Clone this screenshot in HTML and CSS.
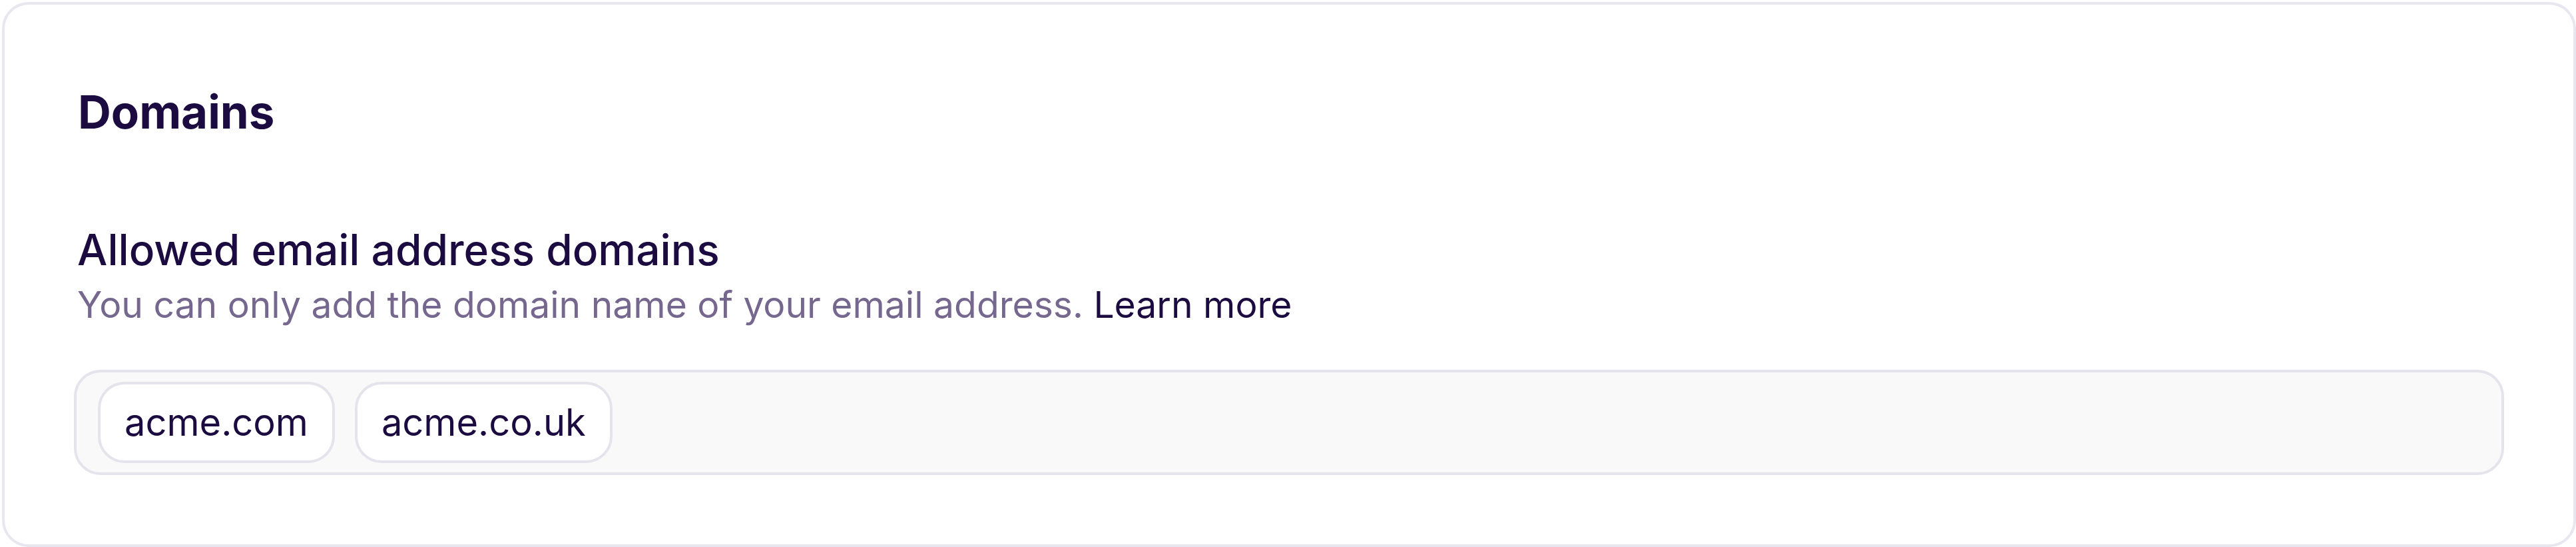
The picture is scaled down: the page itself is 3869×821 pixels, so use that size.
FILE: index.html
```html
<!DOCTYPE html>
<html lang="en">
<head>
<meta charset="utf-8">
<title>Domains</title>
<link rel="stylesheet" href="styles.css">
</head>
<body>
<section class="card">
  <h2 class="title">Domains</h2>
  <div class="setting">
    <div class="label">Allowed email address domains</div>
    <p class="hint">You can only add the domain name of your email address. <a class="link" href="#">Learn more</a></p>
  </div>
  <div class="field">
    <span class="chip">acme.com</span>
    <span class="chip">acme.co.uk</span>
  </div>
</section>
</body>
</html>
```
FILE: styles.css
```css
html, body {
  margin: 0;
  padding: 0;
  background: #ffffff;
}
body {
  padding: 3px 0 0 3px;
  font-family: Inter, "Noto Sans", sans-serif;
  color: #1b0b40;
}
.card {
  box-sizing: border-box;
  border: 4px solid #e8e6ee;
  border-radius: 40px;
  padding: 113px 104px 104px;
  background: #ffffff;
}
.title {
  margin: 0 0 0 6px;
  font-size: 69px;
  line-height: 96px;
  font-weight: 700;
  color: #1b0b40;
}
.setting {
  margin: 115px 0 0 5px;
}
.label {
  font-size: 64px;
  line-height: 88px;
  font-weight: 500;
  color: #1b0b40;
}
.hint {
  margin: 0;
  font-size: 55.2px;
  line-height: 76px;
  color: #76678f;
}
.link {
  color: #1b0b40;
  font-weight: 400;
  text-decoration: none;
}
.field {
  margin-top: 60px;
  display: flex;
  gap: 30px;
  padding: 14px 32px;
  border: 4px solid #e5e3eb;
  border-radius: 40px;
  background: #f9f9f9;
}
.chip {
  padding: 0 36px;
  border: 4px solid #e5e3eb;
  border-radius: 40px;
  background: #ffffff;
  font-size: 56px;
  line-height: 114px;
  color: #1b0b40;
}
```
